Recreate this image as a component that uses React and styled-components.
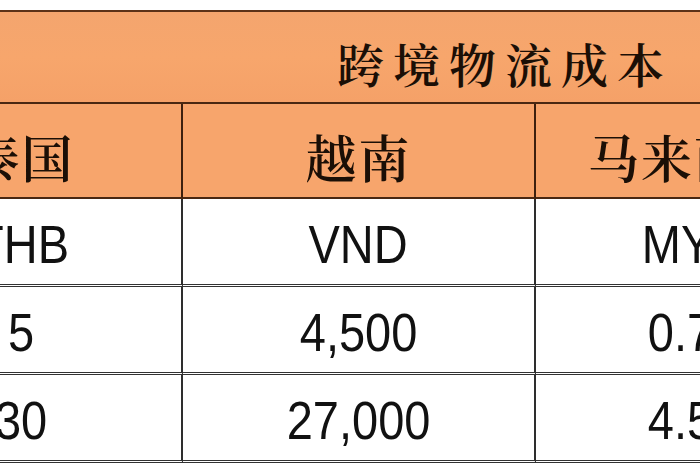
import React from 'react';
import styled, { createGlobalStyle } from 'styled-components';

const GlobalStyle = createGlobalStyle`
  html, body {
    margin: 0;
    padding: 0;
    background: #ffffff;
    overflow: hidden;
  }
`;

const latin = `'Liberation Sans', Arial, sans-serif`;
const cjk = `'Noto Serif CJK SC', 'Noto Sans CJK SC', serif`;

const Page = styled.div`
  width: 700px;
  height: 470px;
  overflow: hidden;
  padding-top: 10px;
  box-sizing: border-box;
  background: #ffffff;
`;

const Sheet = styled.div`
  display: grid;
  grid-template-columns: 321px 353px 316px;
  margin-left: -138px;
  width: max-content;
`;

const TitleCell = styled.div`
  grid-column: 1 / -1;
  height: 94px;
  box-sizing: border-box;
  border-top: 2px solid #5c3218;
  border-bottom: 2px solid #4a2812;
  background: linear-gradient(180deg, #f4a56e 0%, #f7a66c 50%, #f5a168 100%);
  display: flex;
  align-items: center;
  padding-left: 475px;
  padding-top: 10px;
  white-space: nowrap;
  font-family: ${cjk};
  font-size: 47px;
  font-weight: 600;
  letter-spacing: 9px;
  color: #1b0f06;
`;

const HeadCell = styled.div`
  height: 95px;
  box-sizing: border-box;
  background: #f7a56c;
  border-bottom: 2px solid #4a2812;
  border-right: ${p => (p.$last ? 'none' : '2px solid #3d200e')};
  display: flex;
  align-items: center;
  justify-content: center;
  padding-top: 10px;
  white-space: nowrap;
  font-family: ${cjk};
  font-size: 51px;
  font-weight: 600;
  letter-spacing: 2px;
  color: #1b0f06;
`;

const DataCell = styled.div`
  height: 88px;
  box-sizing: border-box;
  background: #ffffff;
  border-bottom: 3px double #333333;
  border-right: ${p => (p.$last ? 'none' : '2px solid #2e2e2e')};
  display: flex;
  align-items: center;
  justify-content: center;
  padding-top: 4px;
`;

// narrow, Calibri-like figures
const Value = styled.span`
  display: inline-block;
  font-family: ${latin};
  font-size: 54px;
  color: #111111;
  transform: scaleX(0.87);
  white-space: nowrap;
`;

const countries = ['泰国', '越南', '马来西亚'];

const rows = [
  ['THB', 'VND', 'MYR'],
  ['5', '4,500', '0.75'],
  ['30', '27,000', '4.50'],
];

export default function App() {
  return (
    <Page>
      <GlobalStyle />
      <Sheet>
        <TitleCell>跨境物流成本</TitleCell>
        {countries.map((c, i) => (
          <HeadCell key={c} $last={i === countries.length - 1}>{c}</HeadCell>
        ))}
        {rows.map((row, r) =>
          row.map((v, i) => (
            <DataCell key={`${r}-${i}`} $last={i === row.length - 1}>
              <Value>{v}</Value>
            </DataCell>
          ))
        )}
      </Sheet>
    </Page>
  );
}
